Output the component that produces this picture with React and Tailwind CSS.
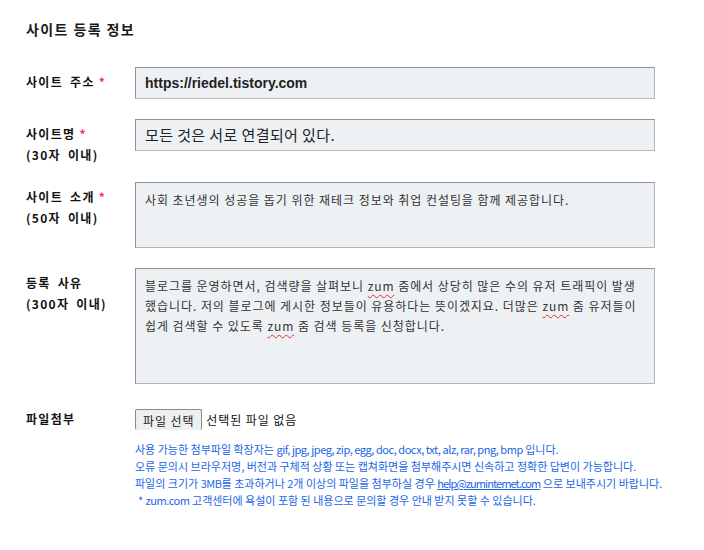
const kr = { fontFamily: '"Noto Sans CJK KR", "Noto Sans", sans-serif' };
const arial = { fontFamily: '"Liberation Sans", "Noto Sans CJK KR", sans-serif' };

const boxCls = 'w-[520px] border border-[#b3b7bb] border-t-[#8f9397] border-l-[#8f9397] bg-[#eef1f4]';

const Zum = () => (
  <span className="underline decoration-wavy decoration-[#e0302f] decoration-1 underline-offset-[3px]">zum</span>
);

// latin bits in the help text run narrower than the hangul
const L = ({ children }) => <span className="tracking-[-0.45px]">{children}</span>;

const Label = ({ title, required, sub, className = '' }) => (
  <div className={`w-[109px] shrink-0 text-[12px] font-bold leading-[21px] tracking-[1.3px] text-[#111] [word-spacing:3px] ${className}`}>
    <div>
      {title}
      {required && <span className="ml-[4px] text-[#f0355a]">*</span>}
    </div>
    {sub && <div>{sub}</div>}
  </div>
);

export default function App() {
  return (
    <div className="min-h-[550px] w-[704px] bg-white px-[26px] pt-[20px]" style={kr}>
      <h1 className="text-[14px] font-bold leading-[18px] tracking-[1.4px] text-[#1a1a1a]">사이트 등록 정보</h1>

      <div className="mt-[29px] flex">
        <Label title="사이트 주소" required className="pt-[4px]" />
        <div className={`${boxCls} flex h-[32px] items-center pl-[9px]`}>
          <span className="text-[14px] font-bold text-[#222]" style={arial}>https://riedel.tistory.com</span>
        </div>
      </div>

      <div className="mt-[20px] flex">
        <Label title="사이트명" required sub="(30자 이내)" className="pt-[4px]" />
        <div className={`${boxCls} flex h-[32px] items-center pl-[9px]`}>
          <span className="text-[15px] tracking-[0.4px] text-[#222]">모든 것은 서로 연결되어 있다.</span>
        </div>
      </div>

      <div className="mt-[17px] flex">
        <Label title="사이트 소개" required sub="(50자 이내)" className="pt-[4px]" />
        <div className={`${boxCls} h-[66px] px-[9px] pt-[7px] text-[12px] leading-[20px] tracking-[0.95px] text-[#333]`}>
          사회 초년생의 성공을 돕기 위한 재테크 정보와 취업 컨설팅을 함께 제공합니다.
        </div>
      </div>

      <div className="mt-[20px] flex">
        <Label title="등록 사유" sub="(300자 이내)" className="pt-[4px]" />
        <div className={`${boxCls} h-[116px] px-[9px] pt-[7px] text-[12px] leading-[20px] tracking-[0.95px] text-[#333]`}>
          <div className="whitespace-nowrap">
            블로그를 운영하면서, 검색량을 살펴보니 <Zum /> 줌에서 상당히 많은 수의 유저 트래픽이 발생
          </div>
          <div className="whitespace-nowrap">
            했습니다. 저의 블로그에 게시한 정보들이 유용하다는 뜻이겠지요. 더많은 <Zum /> 줌 유저들이
          </div>
          <div className="whitespace-nowrap">
            쉽게 검색할 수 있도록 <Zum /> 줌 검색 등록을 신청합니다.
          </div>
        </div>
      </div>

      <div className="mt-[24px] flex">
        <Label title="파일첨부" />
        <div className="flex-1">
          <div className="mt-[1px] flex items-center">
            <button className="h-[21px] rounded-[2px] border border-b-0 border-[#8a8a8a] bg-[#efefef] px-[7px] text-[12px] leading-[19px] tracking-[0.9px] text-[#222]">
              파일 선택
            </button>
            <span className="ml-[4px] text-[12px] tracking-[0.9px] text-[#111]">선택된 파일 없음</span>
          </div>
          <div className="mt-[11px] whitespace-nowrap text-[11px] leading-[17px] text-[#1a66e6]">
            <div>
              사용 가능한 첨부파일 확장자는 <L>gif, jpg, jpeg, zip, egg, doc, docx, txt, alz, rar, png, bmp</L> 입니다.
            </div>
            <div>오류 문의시 브라우저명, 버전과 구체적 상황 또는 캡쳐화면을 첨부해주시면 신속하고 정확한 답변이 가능합니다.</div>
            <div>
              파일의 크기가 <L>3MB</L>를 초과하거나 2개 이상의 파일을 첨부하실 경우{' '}
              <span className="underline tracking-[-0.9px]">help@zuminternet.com</span> 으로 보내주시기 바랍니다.
            </div>
            <div className="pl-[3px]">
              * <L>zum.com</L> 고객센터에 욕설이 포함 된 내용으로 문의할 경우 안내 받지 못할 수 있습니다.
            </div>
          </div>
        </div>
      </div>
    </div>
  );
}
